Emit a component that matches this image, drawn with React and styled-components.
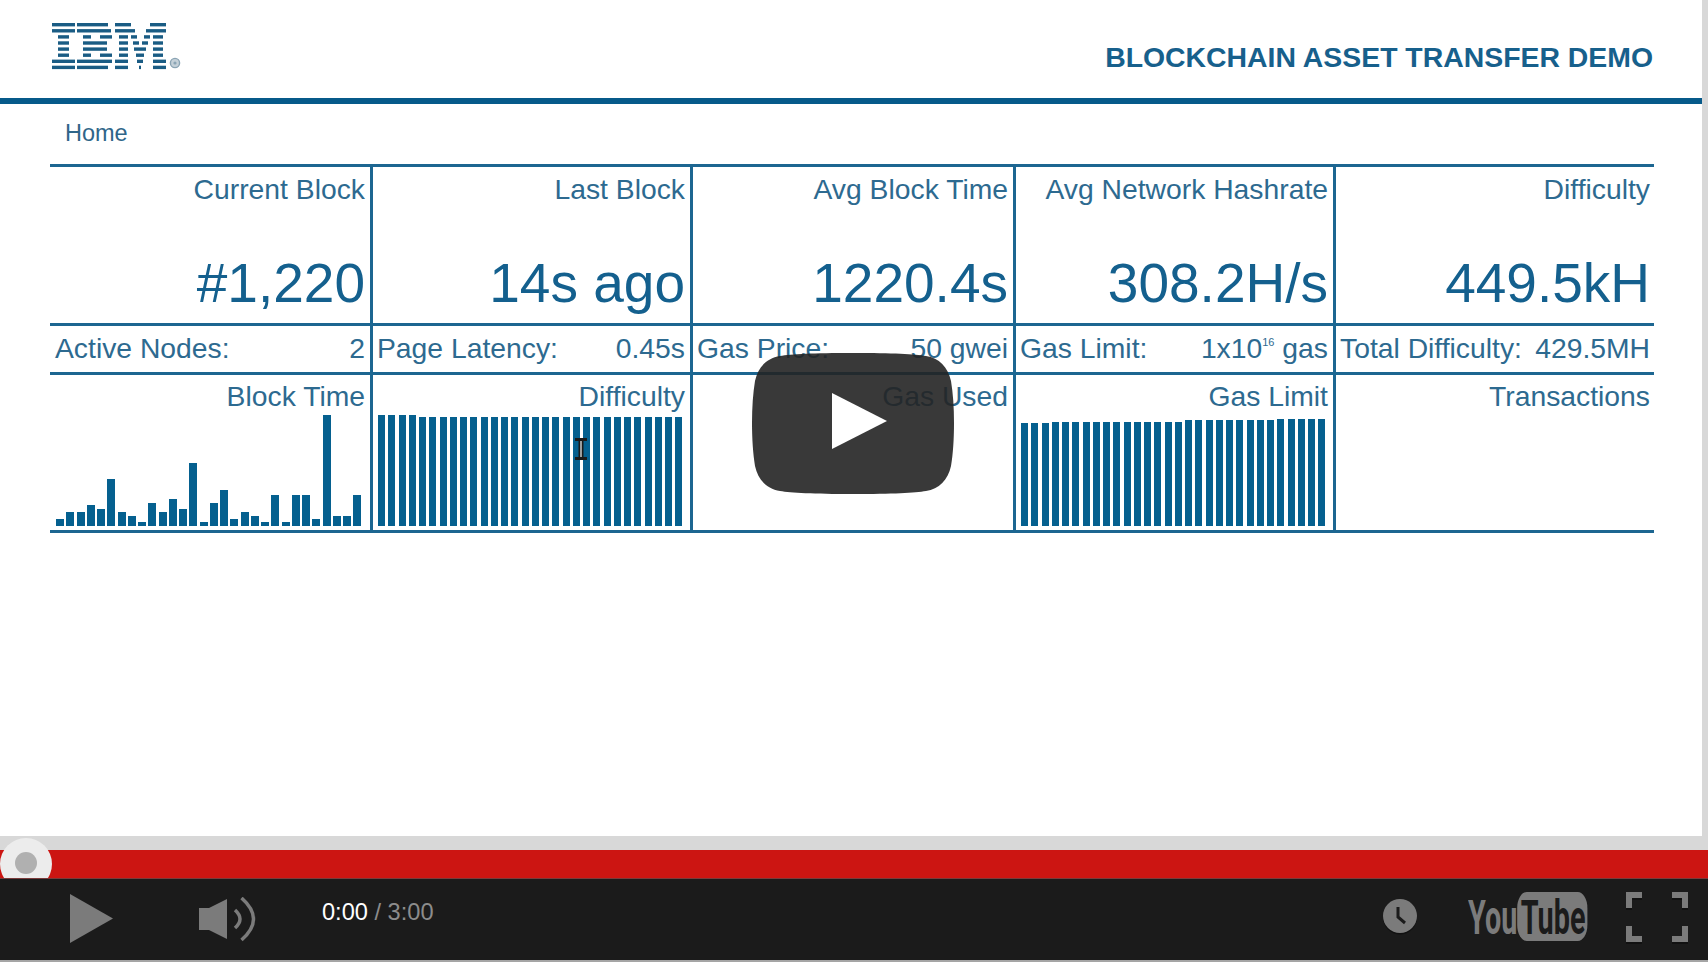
import React from "react";
import styled, { createGlobalStyle } from "styled-components";

const GlobalStyle = createGlobalStyle`
  html, body {
    margin: 0;
    padding: 0;
    background: #fff;
    overflow: hidden;
  }
  * {
    box-sizing: border-box;
  }
`;

const Page = styled.div`
  width: 1708px;
  height: 962px;
  position: relative;
  display: flex;
  flex-direction: column;
  font-family: "Liberation Sans", Arial, sans-serif;
  background: #d8d8d8;
`;

const Slide = styled.div`
  height: 836px;
  flex: none;
  width: 1702px;
  background: #fff;
`;

const SlideHeader = styled.header`
  height: 104px;
  border-bottom: 6px solid #065a8a;
  padding: 22px 49px 0 51px;
  display: flex;
  justify-content: space-between;
  align-items: flex-start;
`;

const Title = styled.h1`
  margin: 19px 0 0;
  font-size: 28.4px;
  line-height: 32px;
  font-weight: 700;
  color: #17608c;
`;

const Nav = styled.nav`
  height: 60px;
  padding: 15px 0 0 65px;
  font-size: 23.5px;
  line-height: 28px;
  color: #2f6689;
`;

const Board = styled.div`
  margin-left: 50px;
  width: 1604px;
  display: grid;
  grid-template-columns: 323px 320px 323px 320px 318px;
  grid-template-rows: 159px 49px 158px;
  border-bottom: 3px solid #1c6691;
  color: #2d6a90;
`;

const Cell = styled.div`
  border-top: 3px solid #1c6691;
  border-right: ${({ $last }) => ($last ? "0" : "3px solid #1c6691")};
  min-width: 0;
`;

const BlockCell = styled(Cell)`
  padding: 6px ${({ $last }) => ($last ? "4px" : "5px")} 0 6px;
  display: flex;
  flex-direction: column;
  align-items: flex-end;
  justify-content: space-between;
`;

const Label = styled.div`
  font-size: 28.3px;
  line-height: 32px;
  white-space: nowrap;
`;

const BigValue = styled.div`
  font-size: 55px;
  line-height: 62px;
  margin-bottom: 9px;
  white-space: nowrap;
  color: #14608e;
`;

const StatCell = styled(Cell)`
  padding: 6px ${({ $last }) => ($last ? "4px" : "5px")} 0
    ${({ $first }) => ($first ? "5px" : "4px")};
  display: flex;
  justify-content: space-between;
  font-size: 28.3px;
  line-height: 32px;
  white-space: nowrap;

  sup {
    font-size: 11px;
    line-height: 0;
    vertical-align: 12px;
  }
`;

const ChartCell = styled(Cell)`
  position: relative;
  padding: 5px ${({ $last }) => ($last ? "4px" : "5px")} 4px
    ${({ $first }) => ($first ? "6px" : "5px")};
  display: flex;
  flex-direction: column;
  align-items: flex-end;
  justify-content: space-between;
`;

const Bars = styled.div`
  width: 100%;
  height: 111px;
  display: flex;
  align-items: flex-end;
  gap: ${({ $dense }) => ($dense ? "3.26px" : "2.26px")};
`;

const Bar = styled.div`
  flex: none;
  width: ${({ $dense }) => ($dense ? "7px" : "8px")};
  background: #05608f;
`;

const Cursor = styled.svg`
  position: absolute;
  left: 201px;
  top: 61px;
`;

const PlayOverlay = styled.svg`
  position: absolute;
  left: 752px;
  top: 353px;
`;

const Track = styled.div`
  position: relative;
  height: 41.5px;
  flex: none;
  overflow: hidden;
  background: #d8d8d8;
`;

const Played = styled.div`
  position: absolute;
  left: 0;
  right: 0;
  bottom: 0;
  height: 27.5px;
  background: #cc1512;
`;

const Thumb = styled.div`
  position: absolute;
  left: 0;
  top: 2px;
  width: 52px;
  height: 52px;
  border-radius: 50%;
  background: #ececec;
  display: flex;
  align-items: center;
  justify-content: center;

  &::after {
    content: "";
    width: 22px;
    height: 22px;
    margin-top: -2px;
    border-radius: 50%;
    background: #b0b0b0;
  }
`;

const Controls = styled.div`
  height: 84.5px;
  flex: none;
  position: relative;
  display: flex;
  align-items: flex-start;
  background: #1b1b1b;
  border-top: 1px solid #7a3a3a;
  border-bottom: 2px solid #a5a5a5;
  padding: 14px 20px 0 70px;
`;

const Time = styled.div`
  margin: 1px 0 0 66px;
  font-size: 23.6px;
  line-height: 36px;
  color: #fff;

  span {
    color: #8c8c8c;
  }
`;

const RightControls = styled.div`
  margin-left: auto;
  display: flex;
  align-items: flex-start;
`;

const PlayIcon = styled.svg`
  flex: none;
  margin-top: 1px;
`;

const VolumeIcon = styled.svg`
  flex: none;
  margin: 4px 0 0 86px;
`;

const ClockIcon = styled.svg`
  flex: none;
  margin: 6px 0 0 0;
`;

const TubeLogo = styled.svg`
  flex: none;
  margin: -9px 0 -8px 51px;
`;

const FullscreenIcon = styled.svg`
  flex: none;
  margin: -1px 0 0 38px;
`;

const blockStats = [
  { label: "Current Block", value: "#1,220" },
  { label: "Last Block", value: "14s ago" },
  { label: "Avg Block Time", value: "1220.4s" },
  { label: "Avg Network Hashrate", value: "308.2H/s" },
  { label: "Difficulty", value: "449.5kH" },
];

const blockTimeBars = [
  7, 14, 14, 21, 17, 47, 14, 10, 4, 23, 14, 27, 17, 63, 4, 23, 36, 7, 14, 10, 4,
  31, 4, 31, 31, 7, 111, 10, 10, 31,
];
const difficultyBars = Array.from({ length: 30 }, (_, i) => (i < 4 ? 111 : 109));
const gasLimitBars = Array.from({ length: 30 }, (_, i) => {
  if (i < 3) return 103;
  if (i < 16) return 104.5;
  if (i < 25) return 106;
  return 107.5;
});

const logoRows = [
  [[52, 75], [77, 108], [115, 131], [150, 166]],
  [[52, 75], [77, 111], [115, 135], [146, 166]],
  [[58, 69], [83, 91], [100, 112], [119, 128], [131, 137], [144, 150], [153, 163]],
  [[58, 69], [83, 107], [119, 128], [133, 139], [142, 148], [153, 163]],
  [[58, 69], [83, 107], [119, 128], [134, 146], [153, 163]],
  [[58, 69], [83, 91], [100, 112], [119, 128], [136, 144], [153, 163]],
  [[52, 75], [77, 112], [115, 128], [137, 143], [153, 166]],
  [[52, 75], [77, 108], [115, 128], [139, 141], [153, 166]],
];

const IbmLogo = () => (
  <svg width="132" height="50" viewBox="51 22 132 50">
    {logoRows.map((row, r) =>
      row.map(([a, b]) => (
        <rect
          key={`${r}-${a}`}
          x={a}
          y={23 + r * 6.1}
          width={b - a}
          height="3.4"
          fill="#1a5c84"
        />
      ))
    )}
    <circle cx="175" cy="63" r="4.6" fill="#c4d0d8" stroke="#8aa4b4" strokeWidth="1.4" />
    <circle cx="175" cy="63" r="1.6" fill="#8aa4b4" />
  </svg>
);

const BarChart = ({ values, dense }) => (
  <Bars $dense={dense}>
    {values.map((h, i) => (
      <Bar key={i} $dense={dense} style={{ height: h }} />
    ))}
  </Bars>
);

const App = () => (
  <Page>
    <GlobalStyle />
    <Slide>
      <SlideHeader>
        <IbmLogo />
        <Title>BLOCKCHAIN ASSET TRANSFER DEMO</Title>
      </SlideHeader>
      <Nav>Home</Nav>
      <Board>
        {blockStats.map((s, i) => (
          <BlockCell key={s.label} $last={i === 4}>
            <Label>{s.label}</Label>
            <BigValue>{s.value}</BigValue>
          </BlockCell>
        ))}

        <StatCell $first>
          <span>Active Nodes:</span>
          <span>2</span>
        </StatCell>
        <StatCell>
          <span>Page Latency:</span>
          <span>0.45s</span>
        </StatCell>
        <StatCell>
          <span>Gas Price:</span>
          <span>50 gwei</span>
        </StatCell>
        <StatCell>
          <span>Gas Limit:</span>
          <span>
            1x10<sup>16</sup> gas
          </span>
        </StatCell>
        <StatCell $last>
          <span>Total Difficulty:</span>
          <span>429.5MH</span>
        </StatCell>

        <ChartCell $first>
          <Label>Block Time</Label>
          <BarChart values={blockTimeBars} />
        </ChartCell>
        <ChartCell>
          <Label>Difficulty</Label>
          <BarChart values={difficultyBars} dense />
          <Cursor width="14" height="26" viewBox="0 0 14 26">
            <path d="M1 2h12v3h-3.5v16H13v3H1v-3h3.5V5H1z" fill="#1a1a1a" />
            <path d="M6.3 5h1.4v16H6.3z" fill="#d8d8d8" />
          </Cursor>
        </ChartCell>
        <ChartCell>
          <Label>Gas Used</Label>
        </ChartCell>
        <ChartCell>
          <Label>Gas Limit</Label>
          <BarChart values={gasLimitBars} dense />
        </ChartCell>
        <ChartCell $last>
          <Label>Transactions</Label>
        </ChartCell>
      </Board>
    </Slide>

    <Track>
      <Played />
      <Thumb />
    </Track>

    <Controls>
      <PlayIcon width="43" height="49" viewBox="0 0 43 49">
        <path d="M0 0l43 24.5L0 49z" fill="#7b7b7b" />
      </PlayIcon>
      <VolumeIcon width="57" height="46" viewBox="0 0 57 46">
        <path d="M0 11h10L28 2v40l-18-9H0z" fill="#7b7b7b" />
        <path d="M36 13q10 9 0 18" fill="none" stroke="#7b7b7b" strokeWidth="3.5" />
        <path d="M42.5 1q24 21 0 42" fill="none" stroke="#7b7b7b" strokeWidth="3.5" />
      </VolumeIcon>
      <Time>
        0:00 <span>/ 3:00</span>
      </Time>
      <RightControls>
        <ClockIcon width="34" height="36" viewBox="0 0 34 36">
          <circle cx="17" cy="18.5" r="17" fill="#111" />
          <circle cx="17" cy="17" r="17" fill="#7b7b7b" />
          <path d="M15 8v10l7 6" fill="none" stroke="#1b1b1b" strokeWidth="3" />
        </ClockIcon>
        <TubeLogo
          width="120"
          height="66"
          viewBox="0 -8 200 66"
          preserveAspectRatio="none"
        >
          <text
            x="0"
            y="42"
            fontFamily="Roboto, sans-serif"
            fontWeight="700"
            fontSize="48"
            fill="#7b7b7b"
          >
            You
          </text>
          <rect x="82" y="0" width="117" height="49" rx="16" fill="#7b7b7b" />
          <text
            x="88"
            y="42"
            fontFamily="Roboto, sans-serif"
            fontWeight="700"
            fontSize="48"
            fill="#1b1b1b"
          >
            Tube
          </text>
        </TubeLogo>
        <FullscreenIcon width="62" height="53" viewBox="0 0 62 53">
          <g fill="#111" transform="translate(0 2)">
            <path d="M0 0h16v6H6v10H0zM46 0h16v16h-6V6H46zM0 34h6v10h10v6H0zM56 34h6v16H46v-6h10z" />
          </g>
          <path
            d="M0 0h16v6H6v10H0zM46 0h16v16h-6V6H46zM0 34h6v10h10v6H0zM56 34h6v16H46v-6h10z"
            fill="#7b7b7b"
          />
        </FullscreenIcon>
      </RightControls>
    </Controls>

    <PlayOverlay width="202" height="141" viewBox="0 0 202 141">
      <path
        d="M101 0c40 0 62 1 73 3 13 2 22 11 25 25 2 12 3 26 3 42s-1 31-3 43c-3 14-12 23-25 25-11 2-33 3-73 3s-62-1-73-3c-13-2-22-11-25-25-2-12-3-27-3-43s1-30 3-42C6 14 15 5 28 3 39 1 61 0 101 0z"
        fill="rgba(36,36,36,0.9)"
      />
      <path d="M80 40l55 28-55 28z" fill="#fff" />
    </PlayOverlay>
  </Page>
);

export default App;
